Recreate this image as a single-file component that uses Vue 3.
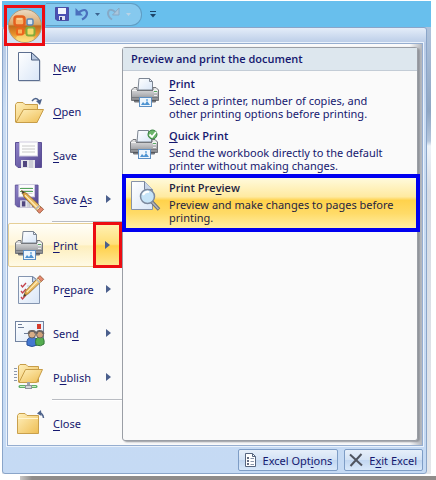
<template>
  <div class="screen">
    <svg class="sprite" width="0" height="0" aria-hidden="true">
      <defs>
        <linearGradient id="gPaper" x1="0" y1="0" x2="1" y2="1">
          <stop offset="0" stop-color="#ffffff" />
          <stop offset="1" stop-color="#d9e6f7" />
        </linearGradient>
        <linearGradient id="gFolder" x1="0" y1="0" x2="1" y2="1">
          <stop offset="0" stop-color="#fff0bd" />
          <stop offset="1" stop-color="#eebe54" />
        </linearGradient>
        <linearGradient id="gDisk" x1="0" y1="0" x2="1" y2="1">
          <stop offset="0" stop-color="#8f83c8" />
          <stop offset="1" stop-color="#51448f" />
        </linearGradient>
        <linearGradient id="gMetal" x1="0" y1="0" x2="0" y2="1">
          <stop offset="0" stop-color="#e6e6e6" />
          <stop offset="0.5" stop-color="#b5b6b9" />
          <stop offset="1" stop-color="#76787c" />
        </linearGradient>
        <linearGradient id="gOrb" x1="0" y1="0" x2="0" y2="1">
          <stop offset="0" stop-color="#ecdcc6" />
          <stop offset="0.45" stop-color="#d9a86c" />
          <stop offset="0.5" stop-color="#c06a1c" />
          <stop offset="0.75" stop-color="#e8912a" />
          <stop offset="1" stop-color="#ffe27a" />
        </linearGradient>
        <linearGradient id="gPencil" x1="0" y1="1" x2="1" y2="0">
          <stop offset="0" stop-color="#d99a34" />
          <stop offset="1" stop-color="#fbd98b" />
        </linearGradient>
      </defs>

      <symbol id="i-new" viewBox="0 0 32 32">
        <path d="M5 2H19L27 10V31H5Z" fill="#b9bfc9" opacity="0.5" />
        <path d="M4.500 1.500H17.500L25.500 9V29.500H4.500Z" fill="url(#gPaper)" stroke="#5d6f90" />
        <path d="M17.500 1.500V9H25.500Z" fill="#b8c8e0" stroke="#4d5f80" />
      </symbol>

      <symbol id="i-open" viewBox="0 0 32 32">
        <path d="M1.500 27V9.500L3 7.500H9L11 9.500H23.500V27Z" fill="url(#gFolder)" stroke="#c79d48" />
        <path d="M2 27.500L9.500 14.500H29.500L23 27.500Z" fill="url(#gFolder)" stroke="#c79d48" />
        <path d="M18 6Q22 1 25 6" fill="none" stroke="#4d628a" stroke-width="1.500" />
        <path d="M22 6L28 4L26 10Z" fill="#4d628a" />
      </symbol>

      <symbol id="i-save" viewBox="0 0 32 32">
        <path d="M1.500 3.500H27.500V28.500H4L1.500 26Z" fill="url(#gDisk)" stroke="#5d5196" />
        <rect x="5.500" y="3" width="18" height="14" fill="#fdfdfd" stroke="#cfcce0" />
        <path d="M8 7H21M8 10H21M8 13H21" stroke="#c9c9c9" />
        <rect x="7" y="21" width="14" height="8" fill="#e4e5ea" />
        <rect x="9" y="22" width="4" height="6" fill="#50467f" />
        <path d="M16 21V29M18 21V29" stroke="#b5b7c2" />
      </symbol>

      <symbol id="i-pencil" viewBox="0 0 32 32">
        <path d="M2 30L5 22L25 1L30 6L9 26Z" fill="url(#gPencil)" stroke="#8a6528" />
        <path d="M6.500 24L26 4" stroke="#fff0bd" stroke-width="1.500" />
        <path d="M22 4L25 1L30 6L27 9Z" fill="#e58a70" stroke="#a5604e" />
        <path d="M20 6L25 11" stroke="#b7b7b7" stroke-width="2" />
        <path d="M2 30L3.500 26L6 28Z" fill="#3a3a3a" />
      </symbol>

      <symbol id="i-saveas" viewBox="0 0 32 32">
        <use href="#i-save" width="28" height="28" x="0" y="-1" />
        <path d="M6 5.500H19M6 8.500H19" stroke="#55a45c" />
        <g transform="matrix(1 0 0 -1 0 31)">
          <use href="#i-pencil" width="25" height="25" x="6" y="0" />
        </g>
      </symbol>

      <symbol id="i-print" viewBox="0 0 32 32">
        <path d="M9 2.500H19.500L22.500 5.500V14H8Z" fill="url(#gPaper)" stroke="#7d8693" />
        <path d="M19.500 2.500V5.500H22.500" fill="none" stroke="#7d8693" />
        <path d="M4 11.500H7V14.500H23V11.500H26L28.500 14V24.500H25.500V26H4.500V24.500H1.500V14Z" fill="url(#gMetal)" stroke="#74777c" />
        <path d="M2 14.500H7M23 14.500H28" stroke="#f3f3f3" />
        <path d="M2 21.500H28" stroke="#777a7f" />
        <path d="M4 24.500H26" stroke="#55575c" />
        <path d="M25.500 13V20" stroke="#eceded" stroke-dasharray="1 2" stroke-width="3" />
        <path d="M24 15.500H27" stroke="#58a964" />
        <rect x="9.500" y="21.500" width="12" height="9" fill="#eef6fd" stroke="#5d8fc2" />
        <path d="M11 29L13 26L15 28L17 25L20 29Z" fill="#4e94d2" />
        <circle cx="17" cy="24" r="1" fill="#6aaade" />
      </symbol>

      <symbol id="i-quick" viewBox="0 0 32 32">
        <use href="#i-print" width="32" height="32" x="-1" />
        <circle cx="22.500" cy="6.500" r="4.500" fill="#6cb56a" stroke="#33803c" />
        <path d="M19.500 6.500L22 9L26 4" fill="none" stroke="#fff" stroke-width="1.800" />
      </symbol>

      <symbol id="i-preview" viewBox="0 0 32 32">
        <path d="M1.500 1.500H14.500L22.500 9.500V29.500H1.500Z" fill="url(#gPaper)" stroke="#8793a8" />
        <path d="M14.500 1.500V9.500H22.500" fill="#c8d5e8" stroke="#76839b" />
        <path d="M22 22L29 29.500" stroke="#6d7078" stroke-width="3.500" />
        <path d="M22 22L28.500 29" stroke="#b0b4bb" stroke-width="1.500" />
        <circle cx="17.500" cy="16.500" r="7" fill="#c6e4f8" stroke="#7c899e" stroke-width="1.500" />
        <path d="M13 15Q15 11 19 12" fill="none" stroke="#fff" stroke-width="2" />
      </symbol>

      <symbol id="i-prepare" viewBox="0 0 32 32">
        <path d="M4.500 3.500H18.500L25.500 9V30.500H4.500Z" fill="url(#gPaper)" stroke="#8495b0" />
        <path d="M18.500 3.500V9H25.500Z" fill="#c5d3e8" stroke="#7486a3" />
        <path d="M7 12L8.500 14L12 10M7 18L8.500 20L12 16M7 24L8.500 26L12 22" fill="none" stroke="#c3434d" stroke-width="1.300" />
        <path d="M13 13H18M13 19H16" stroke="#b7c0d0" />
        <use href="#i-pencil" width="23" height="23" x="8" y="2" />
      </symbol>

      <symbol id="i-send" viewBox="0 0 32 32">
        <rect x="1.500" y="4.500" width="28" height="20" fill="url(#gPaper)" stroke="#7283a0" />
        <path d="M4 7.500H8M4 10.500H10M10 16.500H16" stroke="#6c7c98" />
        <rect x="23" y="7" width="4" height="5" fill="#d53b2d" />
        <path d="M13 28Q12 20 18 20Q24 20 23 28Q18 31 13 28Z" fill="#4478d0" stroke="#2b519b" />
        <circle cx="18" cy="17.500" r="3.500" fill="#d8ad87" stroke="#6a625c" />
        <path d="M22 28Q20 20 26 20Q31 20 30 27Q27 30 22 28Z" fill="#55ad50" stroke="#34773a" />
        <circle cx="26" cy="17.500" r="3.500" fill="#cfa079" stroke="#6a625c" />
        <path d="M14.500 17Q15 13.500 18 14Q21 13.500 21.500 16M22.500 17Q23 13.500 26 14Q29 14 29.500 17" fill="none" stroke="#6b6563" stroke-width="2" />
      </symbol>

      <symbol id="i-publish" viewBox="0 0 32 32">
        <path d="M0 7.500H3M0 10.500H3M0 13.500H3M0 16.500H3M0 19.500H3" stroke="#8c98ac" />
        <path d="M4.500 21V5L6 3.500H12L14 5.500H24.500V21Z" fill="url(#gFolder)" stroke="#c79d48" />
        <path d="M5 21.500L11.500 8.500H28.500L22.500 21.500Z" fill="url(#gFolder)" stroke="#c79d48" />
        <path d="M14.500 21V26" stroke="#9ca1aa" stroke-width="3" />
        <path d="M6 25.500H22" stroke="#5eaf67" stroke-width="3" stroke-linecap="round" />
        <path d="M6 25.500H22" stroke="#c6eac1" />
        <rect x="11.500" y="24.500" width="6" height="3" fill="#d2d5da" stroke="#8e939c" />
      </symbol>

      <symbol id="i-close" viewBox="0 0 32 32">
        <path d="M3.500 26.500V8.500L5 6.500H11L13 8.500H24.500V26.500Z" fill="url(#gFolder)" stroke="#c9a04c" />
        <path d="M4 11.500H24" stroke="#fff4cf" />
        <path d="M29.500 11Q29 6 25 6" fill="none" stroke="#4d628a" stroke-width="1.500" />
        <path d="M27 3L23 6.500L27.500 9Z" fill="#4d628a" />
      </symbol>

      <symbol id="i-orb" viewBox="0 0 36 36">
        <circle cx="18" cy="18" r="16.500" fill="url(#gOrb)" stroke="#b09a7c" />
        <ellipse cx="18" cy="30" rx="9" ry="4" fill="#ffe98c" opacity="0.6" />
        <rect x="7.500" y="8.500" width="10" height="9" rx="2.500" fill="#f8b36a" stroke="#e4601f" stroke-width="2.500" />
        <rect x="20" y="11" width="6" height="6" rx="1.500" fill="#d9e4ee" stroke="#5a86b5" stroke-width="1.500" />
        <rect x="10" y="20.500" width="6" height="6" rx="1.500" fill="#f9b45c" stroke="#ec641c" stroke-width="2" />
        <rect x="19.500" y="19.500" width="8" height="8" rx="2" fill="#f6dc6a" stroke="#83ab3c" stroke-width="2" />
        <path d="M10 11H15" stroke="#ffe9b5" />
      </symbol>
    </svg>

    <div class="window">
      <header class="titlebar">
        <button class="orb" type="button" aria-label="Office Button">
          <svg width="36" height="36"><use href="#i-orb" /></svg>
        </button>
        <div class="quick-access">
          <button type="button" class="qa" aria-label="Save">
            <svg width="14" height="14" viewBox="0 0 14 14">
              <path d="M0.500 0.500H13.500V13.500H2L0.500 12Z" fill="#4a50b4" stroke="#4a50a4" />
              <rect x="3" y="1" width="8" height="6" fill="#f2f5fd" />
              <rect x="4" y="9" width="6" height="4" fill="#dfe3f2" />
              <rect x="5" y="10" width="2" height="3" fill="#343a80" />
            </svg>
          </button>
          <button type="button" class="qa" aria-label="Undo">
            <svg width="14" height="14" viewBox="0 0 14 14">
              <path d="M3 6Q11 0 12 6Q12 10 7 12.500" fill="none" stroke="#4a70bd" stroke-width="2.200" />
              <path d="M0.500 1V8.500H8Z" fill="#4a70bd" />
            </svg>
          </button>
          <svg class="tick" width="5" height="3" viewBox="0 0 5 3"><path d="M0 0H5L2.500 3Z" fill="#3c6490" /></svg>
          <button type="button" class="qa redo" aria-label="Redo">
            <svg width="14" height="14" viewBox="0 0 14 14">
              <path d="M10 5.500Q3 0 2 6Q2 10 6 12.500" fill="none" stroke="#86a9c6" stroke-width="2" />
              <path d="M13 1V8H6.500Z" fill="#a9c6dc" stroke="#86a9c6" />
            </svg>
          </button>
          <svg class="tick" width="5" height="3" viewBox="0 0 5 3"><path d="M0 0H5L2.500 3Z" fill="#b9d3e6" /></svg>
        </div>
        <button type="button" class="customize" aria-label="Customize Quick Access Toolbar">
          <svg width="6" height="7" viewBox="0 0 6 7"><path d="M0 0.500H6" stroke="#1d4468" /><path d="M0 3H6L3 6.500Z" fill="#1d4468" /></svg>
        </button>
      </header>

      <main class="office-menu">
        <div class="panes">
          <nav class="commands">
            <template v-for="c in commands" :key="c.icon">
              <hr v-if="c.rule" />
              <button type="button" class="command" :class="{ active: c.active }">
                <svg class="icon" width="32" height="32"><use :href="'#i-' + c.icon" /></svg>
                <span class="label">{{ c.text[0] }}<u>{{ c.text[1] }}</u>{{ c.text[2] }}</span>
                <span v-if="c.arrow" class="arrow">
                  <svg width="5" height="8" viewBox="0 0 5 8"><path d="M0 0L5 4L0 8Z" fill="#4b5f8c" /></svg>
                </span>
              </button>
            </template>
          </nav>

          <section class="details">
            <h2>Preview and print the document</h2>
            <button
              v-for="o in options"
              :key="o.icon"
              type="button"
              class="option"
              :class="{ hot: o.hot }"
            >
              <svg class="icon" width="32" height="32"><use :href="'#i-' + o.icon" /></svg>
              <span class="text">
                <strong>{{ o.text[0] }}<u>{{ o.text[1] }}</u>{{ o.text[2] }}</strong>
                <span v-for="line in o.lines" :key="line" class="line">{{ line }}</span>
              </span>
            </button>
          </section>
        </div>

        <footer class="actions">
          <button type="button" class="action">
            <svg width="16" height="16" viewBox="0 0 16 16">
              <path d="M3.500 1.500H10.500L13.500 4.500V14.500H3.500Z" fill="#fff" stroke="#56657e" />
              <path d="M10.500 1.500V4.500H13.500" fill="none" stroke="#56657e" />
              <path d="M5 6H7M5 9H7M5 12H7" stroke="#333f5a" stroke-width="1.500" />
              <path d="M8.500 6.500H12M8.500 9.500H12M8.500 12.500H12" stroke="#8c98ad" />
            </svg>
            <span>Excel Opt<u>i</u>ons</span>
          </button>
          <button type="button" class="action">
            <svg width="16" height="16" viewBox="0 0 16 16">
              <path d="M2 2.500L14 13.500M13.500 2L2.500 14" stroke="#505560" stroke-width="2" />
            </svg>
            <span>E<u>x</u>it Excel</span>
          </button>
        </footer>
      </main>
    </div>
    <div class="shade"></div>
  </div>
</template>

<script setup>
const commands = [
  { icon: 'new', text: ['', 'N', 'ew'] },
  { icon: 'open', text: ['', 'O', 'pen'] },
  { icon: 'save', text: ['', 'S', 'ave'] },
  { icon: 'saveas', text: ['Save ', 'A', 's'], arrow: true },
  { icon: 'print', text: ['', 'P', 'rint'], arrow: true, active: true, rule: true },
  { icon: 'prepare', text: ['Pr', 'e', 'pare'], arrow: true },
  { icon: 'send', text: ['Sen', 'd', ''], arrow: true },
  { icon: 'publish', text: ['P', 'u', 'blish'], arrow: true },
  { icon: 'close', text: ['', 'C', 'lose'], rule: true }
]

const options = [
  {
    icon: 'print',
    text: ['', 'P', 'rint'],
    lines: ['Select a printer, number of copies, and', 'other printing options before printing.']
  },
  {
    icon: 'quick',
    text: ['', 'Q', 'uick Print'],
    lines: ['Send the workbook directly to the default', 'printer without making changes.']
  },
  {
    icon: 'preview',
    text: ['Print Pre', 'v', 'iew'],
    lines: ['Preview and make changes to pages before', 'printing.'],
    hot: true
  }
]
</script>

<style>
body {
  margin: 0;
  background: #fff;
}
</style>

<style scoped>
.screen {
  padding-top: 1px;
  font-family: "Noto Sans", "Open Sans", sans-serif;
  font-size: 11px;
  color: #15186f;
}

.screen * {
  box-sizing: border-box;
}

.sprite {
  position: absolute;
}

button {
  margin: 0;
  padding: 0;
  border: 0;
  background: none;
  font: inherit;
  color: inherit;
  text-align: left;
}

svg {
  display: block;
  flex: none;
}

u {
  text-underline-offset: 2px;
}

.window {
  margin: 0 5px 0 2px;
  background: linear-gradient(#b9cce4, #8fa6c3 110px, #b5c6dc 140px, #eef3f9 145px, #d5dbe4 190px, #e3e6ea);
}

.titlebar {
  position: relative;
  display: flex;
  align-items: center;
  height: 26px;
  padding-left: 44px;
  background: #68bfed;
}

.orb {
  position: absolute;
  z-index: 2;
  top: 4px;
  left: 2px;
  width: 41px;
  height: 41px;
  border: 3px solid #ec0c12;
  background: linear-gradient(#68bfed 50%, #d2e0f2 50%);
}

.orb svg {
  margin: 0 auto;
}

.quick-access {
  display: flex;
  align-items: center;
  gap: 6px;
  height: 23px;
  padding: 0 10px 0 9px;
  border: 1px solid #5f9dc4;
  border-left: 0;
  border-radius: 0 11px 11px 0;
  background: #86c9ee;
}

.customize {
  margin-left: 8px;
}

.office-menu {
  margin-right: 4px;
  padding: 15px 3px 0 4px;
  border: 1px solid #8aa5c9;
  border-radius: 3px;
  background: linear-gradient(#e4edf9, #b7cae6 16px, #c9dbf2 80px, #c5daf4);
}

.panes {
  display: flex;
  padding-right: 4px;
  border: 1px solid #96aed0;
  outline: 1px solid #eaf2fc;
  background: linear-gradient(90deg, #fafafa 97%, #b4b7bd);
}

.commands {
  flex: none;
  width: 114px;
  padding-top: 1px;
  background: #fafafa;
}

.commands hr {
  height: 2px;
  margin: 0 0 0 44px;
  border: 0;
  border-top: 1px solid #b9bcc2;
  background: #fff;
}

.command {
  display: flex;
  align-items: center;
  width: 100%;
  height: 44px;
  padding-left: 6px;
}

.label {
  flex: 1;
  margin-left: 7px;
}

.arrow {
  position: relative;
  display: flex;
  align-items: center;
  justify-content: center;
  width: 27px;
  height: 100%;
}

.active {
  border: 1px solid #e6cf96;
  border-radius: 2px;
  background: linear-gradient(#fffef8, #fff5d6 50%, #fdeebc 52%, #fffae6);
  padding-left: 5px;
}

.active .arrow {
  background: linear-gradient(#fff1b5, #ffdf78 48%, #ffd04a 52%, #ffe795);
}

.active .arrow::after {
  content: "";
  position: absolute;
  inset: -2px -1px;
  border: 3px solid #ec0c12;
}

.details {
  flex: 1;
  min-width: 0;
  margin: 3px 0 4px;
  border: 1px solid #9a9ea5;
  border-radius: 3px;
  background: #fafafa;
  box-shadow: 2px 1px 2px #8f9298;
}

h2 {
  height: 23px;
  margin: 0 0 2px;
  padding-left: 8px;
  border-bottom: 1px solid #c3ccd6;
  background: #dde7ee;
  font-family: "Open Sans", "Noto Sans", sans-serif;
  font-size: 11px;
  line-height: 22px;
  font-weight: 600;
}

.option {
  position: relative;
  display: flex;
  width: 100%;
  height: 52px;
  padding: 3px 0 0 7px;
}

.text {
  margin-left: 7px;
  white-space: nowrap;
}

.text strong,
.line {
  display: block;
  line-height: 13px;
}

.text strong {
  margin-bottom: 2px;
  font-family: "Open Sans", "Noto Sans", sans-serif;
  font-weight: 600;
  line-height: 16px;
}

.hot {
  background: linear-gradient(#fffbe0, #ffeaa0 38%, #ffd24c 45%, #ffdb68 70%, #fff0a8);
  color: #1f2440;
}

.hot::after {
  content: "";
  position: absolute;
  inset: -3px -3px -3px -1px;
  border: 4px solid #0000f0;
}

.actions {
  display: flex;
  justify-content: flex-end;
  gap: 6px;
  padding: 3px 0 2px;
}

.action {
  display: flex;
  align-items: center;
  gap: 5px;
  height: 22px;
  padding: 0 5px 0 3px;
  border: 1px solid #7e9dc6;
  border-radius: 2px;
  background: linear-gradient(#e6effa, #d3e2f5 50%, #c2d7f1 52%, #d8e8fa);
}

.shade {
  height: 4px;
  margin: 2px 0 0 20px;
  background: linear-gradient(90deg, #c9c7c5, #8f8c8a 12px);
}
</style>
